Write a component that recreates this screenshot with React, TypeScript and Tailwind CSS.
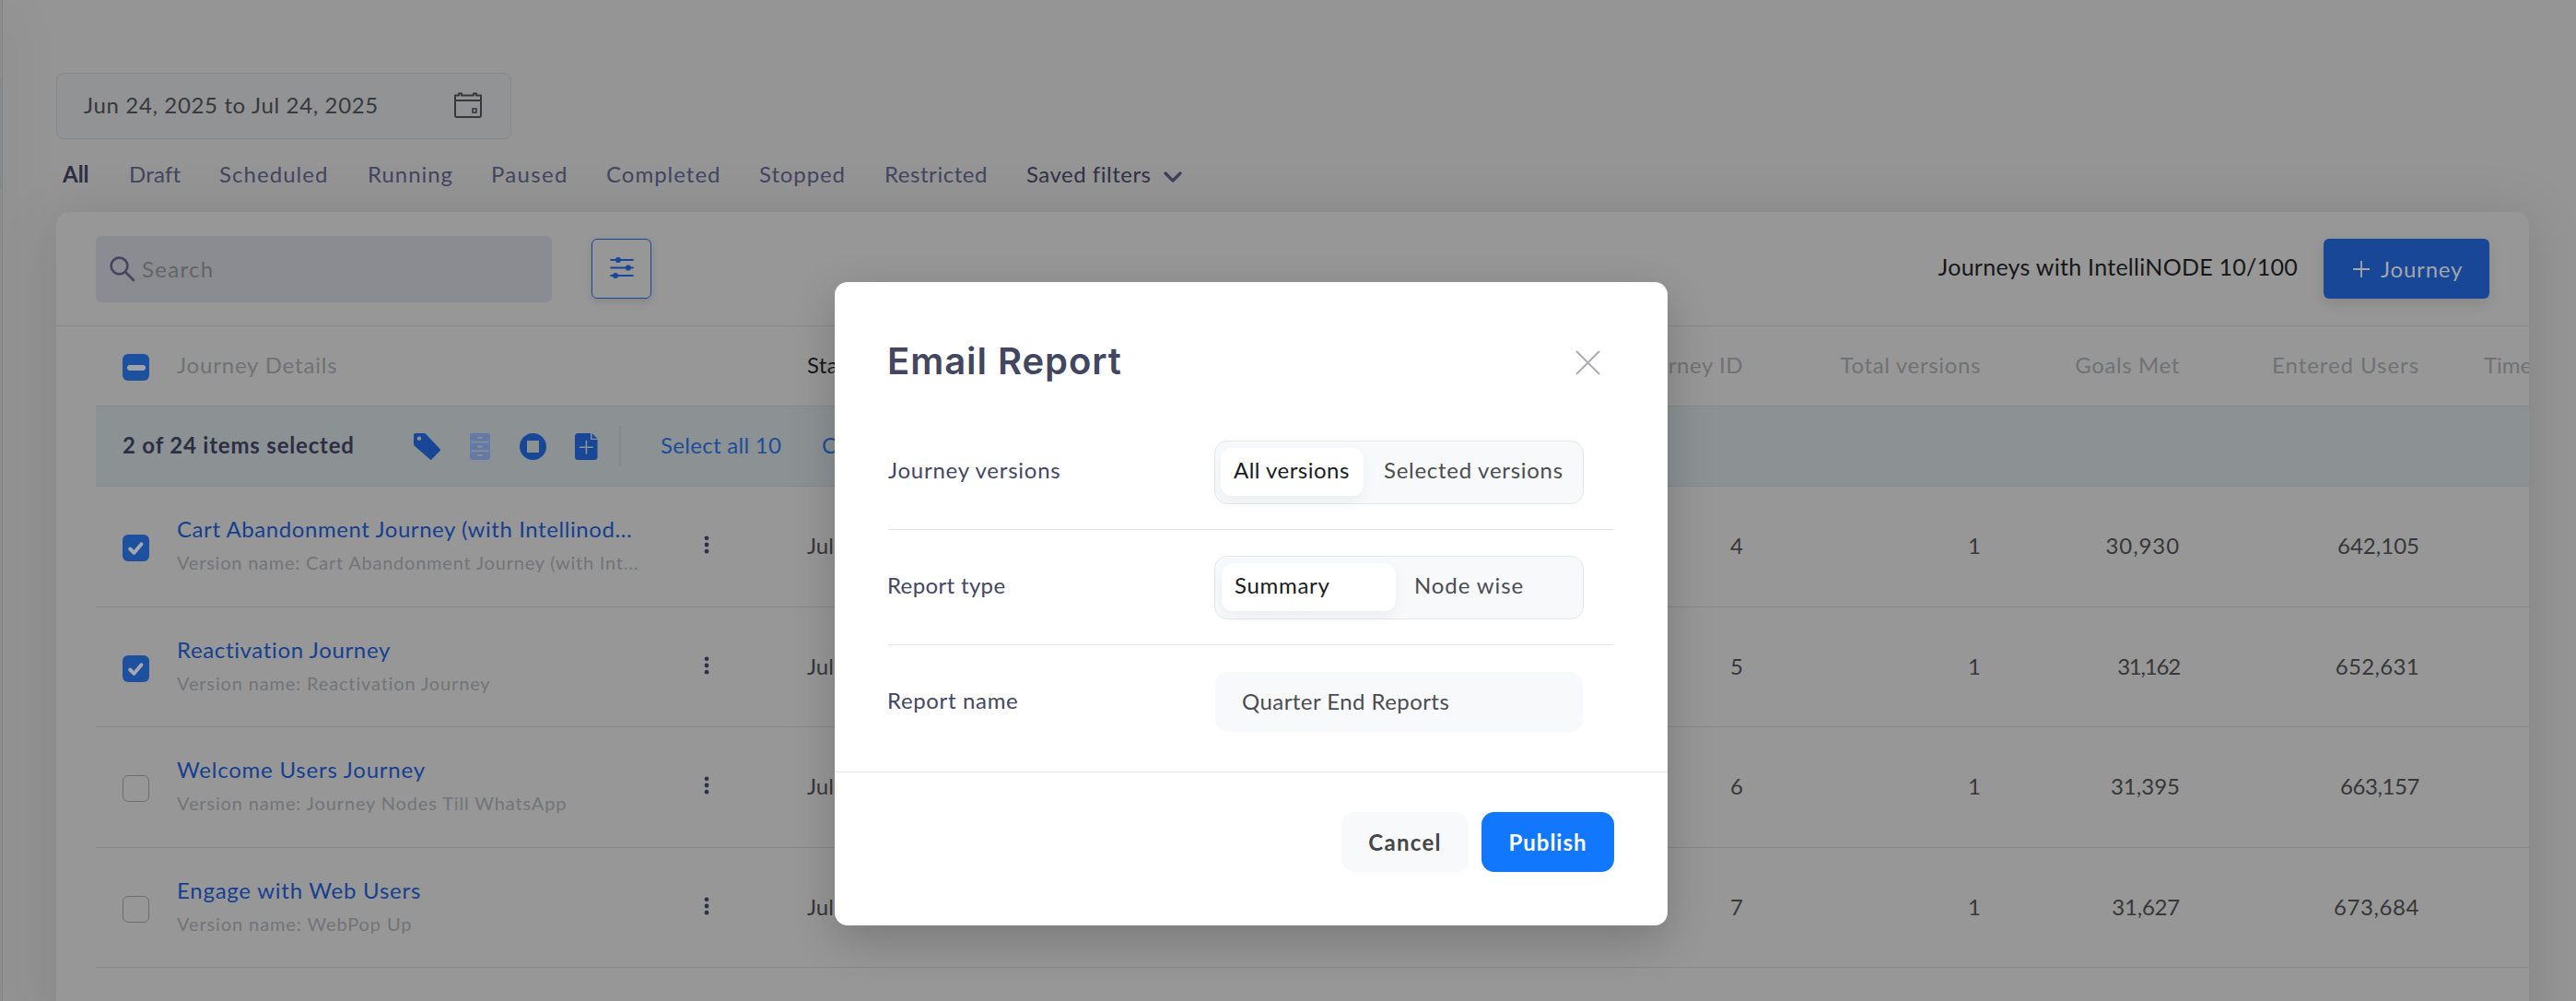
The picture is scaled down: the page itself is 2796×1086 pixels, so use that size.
import type { ReactNode } from "react";

type Row = {
  title: ReactNode;
  titleClass: string;
  version: string;
  versionClass: string;
  checked: boolean;
  id: string;
  goals: string;
  goalsClass: string;
  users: string;
  usersClass: string;
  height: string;
};

const tabs = [
  { label: "All", cls: "w-[73px] font-bold text-[#2c2e43] pl-px" },
  { label: "Draft", cls: "w-[98px] tracking-[0.2px]" },
  { label: "Scheduled", cls: "w-[161px] tracking-[1.05px]" },
  { label: "Running", cls: "w-[134px] tracking-[0.94px]" },
  { label: "Paused", cls: "w-[125px] tracking-[1.3px]" },
  { label: "Completed", cls: "w-[166px] tracking-[1px]" },
  { label: "Stopped", cls: "w-[136px] tracking-[0.9px]" },
  { label: "Restricted", cls: "w-[154px] tracking-[0.55px]" },
];

const rows: Row[] = [
  {
    title: "Cart Abandonment Journey (with Intellinod...",
    titleClass: "tracking-[0.57px]",
    version: "Version name: Cart Abandonment Journey (with Int...",
    versionClass: "tracking-[0.78px]",
    checked: true,
    id: "4",
    goals: "30,930",
    goalsClass: "tracking-[0.9px]",
    users: "642,105",
    usersClass: "tracking-[0px]",
    height: "h-[131px]",
  },
  {
    title: "Reactivation Journey",
    titleClass: "tracking-[0.65px]",
    version: "Version name: Reactivation Journey",
    versionClass: "tracking-[0.85px]",
    checked: true,
    id: "5",
    goals: "31,162",
    goalsClass: "tracking-[-1.2px]",
    users: "652,631",
    usersClass: "tracking-[0.33px]",
    height: "h-[130px]",
  },
  {
    title: "Welcome Users Journey",
    titleClass: "tracking-[0.78px]",
    version: "Version name: Journey Nodes Till WhatsApp",
    versionClass: "tracking-[0.86px]",
    checked: false,
    id: "6",
    goals: "31,395",
    goalsClass: "tracking-[0px]",
    users: "663,157",
    usersClass: "tracking-[-0.42px]",
    height: "h-[131px]",
  },
  {
    title: "Engage with Web Users",
    titleClass: "tracking-[0.75px]",
    version: "Version name: WebPop Up",
    versionClass: "tracking-[0.9px]",
    checked: false,
    id: "7",
    goals: "31,627",
    goalsClass: "tracking-[-0.23px]",
    users: "673,684",
    usersClass: "tracking-[0.58px]",
    height: "h-[130px]",
  },
];

const columns = "grid grid-cols-[88px_544px_140px_400px_616px_258px_216px_260px_1fr]";

function CalendarIcon() {
  return (
    <svg width="32" height="30" viewBox="0 0 32 30" fill="none" stroke="#36383a" strokeWidth="2">
      <path d="M2 4.5h4v-2h3v2h13v-2h3v2h5V26a2 2 0 0 1-2 2H4a2 2 0 0 1-2-2z" strokeLinejoin="round" />
      <path d="M2 10h28" />
      <rect x="21" y="19" width="4" height="4" strokeWidth="1.6" />
    </svg>
  );
}

function SearchIcon() {
  return (
    <svg width="28" height="28" viewBox="0 0 28 28" fill="none" stroke="#434660" strokeWidth="2.6" strokeLinecap="round">
      <circle cx="10.5" cy="10.5" r="8.9" />
      <path d="M17 17l9 9" />
    </svg>
  );
}

function SlidersIcon() {
  return (
    <svg width="26" height="24" viewBox="0 0 26 24" stroke="#184797" strokeWidth="1.8" strokeLinecap="round" fill="#184797">
      <path d="M1 3h24M1 11.5h24M1 20h24" />
      <g stroke="none">
        <circle cx="9" cy="3" r="3.1" />
        <circle cx="19.8" cy="11.5" r="3.1" />
        <circle cx="6" cy="20" r="3.1" />
      </g>
    </svg>
  );
}

function Checkbox({ state }: { state: "off" | "on" | "mixed" }) {
  if (state === "off") {
    return <div className="size-[29px] rounded-md border border-[#6d6d70]" />;
  }
  return (
    <div className="flex size-[29px] items-center justify-center rounded-md bg-[#1d509f]">
      {state === "on" ? (
        <svg width="19" height="16" viewBox="0 0 19 16" fill="none" stroke="#a5a9af" strokeWidth="3.9" strokeLinecap="round" strokeLinejoin="round">
          <path d="M3.2 8.5l4.3 4.3L15.5 3.2" />
        </svg>
      ) : (
        <div className="h-[6px] w-5 rounded-[3px] bg-[#a0a3a8]" />
      )}
    </div>
  );
}

function TagIcon() {
  return (
    <svg width="29" height="29" viewBox="0 0 29 29" fill="#184797">
      <path
        fillRule="evenodd"
        d="M2 0h9.5a2 2 0 0 1 1.4.6l15.8 16.6a1.3 1.3 0 0 1 0 1.8l-9.3 9.6a1 1 0 0 1-1.5 0L.6 13.4a2 2 0 0 1-.6-1.4V2a2 2 0 0 1 2-2zm4 3.4a2.3 2.3 0 1 0 0 4.6 2.3 2.3 0 0 0 0-4.6z"
      />
    </svg>
  );
}

function CabinetIcon() {
  return (
    <svg width="22" height="29" viewBox="0 0 22 29">
      <rect width="22" height="29" rx="3" fill="#637aa6" />
      <g stroke="#8c9294" strokeLinecap="round">
        <path d="M2 9.5h18M2 19.2h18" strokeWidth="1.4" />
        <path d="M9 4.8h4M9 14.5h4M9 24h4" strokeWidth="1.8" />
      </g>
    </svg>
  );
}

function StopIcon() {
  return (
    <svg width="29" height="29" viewBox="0 0 29 29">
      <circle cx="14.5" cy="14.5" r="14.5" fill="#184797" />
      <rect x="8" y="8" width="13" height="13" rx="0.5" fill="#8c9294" />
    </svg>
  );
}

function AddFileIcon() {
  return (
    <svg width="25" height="29" viewBox="0 0 25 29">
      <path d="M3.5 0H17v7h7.5v18.5a3.5 3.5 0 0 1-3.5 3.5H3.5A3.5 3.5 0 0 1 0 25.5v-22A3.5 3.5 0 0 1 3.5 0zM18.5.3l5.8 5.4h-5.8z" fill="#184797" />
      <path d="M12.4 8.5v13.5M5.6 15.2h13.6" stroke="#8c9294" strokeWidth="1.6" strokeLinecap="round" />
    </svg>
  );
}

function KebabIcon() {
  return (
    <svg width="6" height="20" viewBox="0 0 6 20" fill="#2f3247">
      <circle cx="3" cy="2.8" r="2.4" />
      <circle cx="3" cy="10" r="2.4" />
      <circle cx="3" cy="17.2" r="2.4" />
    </svg>
  );
}

function TableRow({ row }: { row: Row }) {
  return (
    <div className={`${columns} ${row.height} border-b border-[#868788] text-[#363738]`}>
      <div className="pt-[52px] pl-[29px]">
        <Checkbox state={row.checked ? "on" : "off"} />
      </div>
      <div className="pt-[31px]">
        <div className={`${row.titleClass} text-[#153f91]`}>{row.title}</div>
        <div className={`${row.versionClass} mt-[9px] text-xl leading-6 text-[#727477]`}>{row.version}</div>
      </div>
      <div className="pt-[53px] pl-7">
        <KebabIcon />
      </div>
      <div className="pt-[49px]">Jul 24, 2025</div>
      <div className="pt-[49px] text-right">{row.id}</div>
      <div className="pt-[49px] text-right">1</div>
      <div className={`${row.goalsClass} pt-[49px] text-right`}>{row.goals}</div>
      <div className={`${row.usersClass} pt-[49px] text-right`}>{row.users}</div>
    </div>
  );
}

function JourneysCard() {
  return (
    <section className="mt-[26px] h-[900px] overflow-hidden rounded-[14px] bg-[#979797] shadow-[0_4px_60px_rgba(0,0,0,0.13)]">
      <div className="flex h-[124px] items-start border-b border-[#868788] px-[43px] pt-[26px]">
        <div className="flex h-[72px] w-[495px] items-center rounded-md bg-[#8b8c91] pl-[15px]">
          <SearchIcon />
          <span className="ml-[7px] tracking-[1.3px] text-[#636467]">Search</span>
        </div>
        <div className="mt-[3px] ml-[43px] flex size-[65px] items-center justify-center rounded-md border border-[#184797] pb-[2px] shadow-[0_3px_8px_rgba(0,0,0,0.12)]">
          <SlidersIcon />
        </div>
        <span className="mt-[18px] ml-auto text-[25px] tracking-[0.27px] text-[#161718]">Journeys with IntelliNODE 10/100</span>
        <button className="mt-[3px] ml-7 flex h-[65px] w-[180px] items-center rounded-md bg-[#184797] pl-8 text-[#a3a5a9] shadow-[0_6px_16px_rgba(0,0,0,0.1)]">
          <svg width="18" height="18" viewBox="0 0 18 18" stroke="currentColor" strokeWidth="1.8">
            <path d="M9 0v18M0 9h18" />
          </svg>
          <span className="ml-3 tracking-[0.8px]">Journey</span>
        </button>
      </div>

      <div className="pl-[43px]">
        <div className={`${columns} h-[87px] border-b border-[#868788] pt-[27px] text-[#6f7275]`}>
          <div className="pt-[3px] pl-[29px]">
            <Checkbox state="mixed" />
          </div>
          <div className="tracking-[0.82px]">Journey Details</div>
          <div />
          <div className="tracking-[0.3px] text-[#161718]">Start Date</div>
          <div className="text-right tracking-[0.55px]">Journey ID</div>
          <div className="text-right tracking-[0.65px]">Total versions</div>
          <div className="text-right tracking-[0.6px]">Goals Met</div>
          <div className="text-right tracking-[0.95px]">Entered Users</div>
          <div className="pl-[70px] whitespace-nowrap">Time</div>
        </div>

        <div className="flex h-[87px] items-center border-b border-[#868788] bg-[#8c9294] pl-[29px]">
          <span className="mb-[2px] w-[316px] font-bold tracking-[0.8px] text-[#2c2e43]">2 of 24 items selected</span>
          <div className="flex w-[223px] items-center">
            <TagIcon />
            <span className="ml-8">
              <CabinetIcon />
            </span>
            <span className="ml-8">
              <StopIcon />
            </span>
            <span className="ml-[31px]">
              <AddFileIcon />
            </span>
          </div>
          <div className="mr-[43px] h-[43px] w-[2px] bg-[#85888a]" />
          <span className="mb-[2px] w-[175px] tracking-[0.3px] text-[#1c4c99]">Select all 10</span>
          <span className="mb-[2px] text-[#1c4c99]">Clear</span>
        </div>

        {rows.map((row) => (
          <TableRow key={row.id} row={row} />
        ))}
      </div>
    </section>
  );
}

function ReportDialog() {
  return (
    <div
      role="dialog"
      className="absolute top-[306px] left-[906px] h-[698px] w-[904px] rounded-[14px] bg-white shadow-[0_16px_50px_rgba(0,0,0,0.2)]"
    >
      <div className="flex h-[144px] items-start justify-between px-[58px] pt-[61px]">
        <h2 className="-ml-px font-[Inter] text-[40px] leading-[50px] font-semibold tracking-[0.95px] text-[#434661]">Email Report</h2>
        <svg className="mt-[13px] mr-[15px]" width="27" height="27" viewBox="0 0 27 27" stroke="#a9aeb4" strokeWidth="2" strokeLinecap="round">
          <path d="M1.5 1.5l24 24M25.5 1.5l-24 24" />
        </svg>
      </div>

      <div className="px-[58px] text-[#444764]">
        <div className="flex h-[125px] border-b border-[#e3e4e5]">
          <span className="w-[354px] pt-[45px] tracking-[0.75px]">Journey versions</span>
          <div className="mt-7 flex h-[69px] w-[401px] rounded-[14px] border border-[#e4e6e8] bg-[#f8f9fb] p-[7px] pl-[6px]">
            <div className="h-[52px] w-[155px] rounded-xl bg-white pt-[9px] pl-[14px] tracking-[0.48px] whitespace-nowrap text-[#1b1c1e] shadow-[0_6px_16px_rgba(0,0,0,0.05)]">
              All versions
            </div>
            <div className="pt-[9px] pl-[22px] tracking-[0.72px] whitespace-nowrap text-[#4b4d50]">Selected versions</div>
          </div>
        </div>

        <div className="flex h-[125px] border-b border-[#e3e4e5]">
          <span className="-ml-px w-[355px] pt-[45px] tracking-[0.35px]">Report type</span>
          <div className="mt-7 flex h-[69px] w-[401px] rounded-[14px] border border-[#e4e6e8] bg-[#f8f9fb] p-[7px]">
            <div className="h-[52px] w-[189px] rounded-xl bg-white pt-[9px] pl-[14px] tracking-[0.7px] text-[#1b1c1e] shadow-[0_6px_16px_rgba(0,0,0,0.05)]">
              Summary
            </div>
            <div className="pt-[9px] pl-5 tracking-[0.9px] text-[#4b4d50]">Node wise</div>
          </div>
        </div>

        <div className="flex h-[137px]">
          <span className="-ml-px w-[356px] pt-[45px] tracking-[0.65px]">Report name</span>
          <div className="mt-[29px] h-[65px] w-[399px] rounded-[14px] bg-[#f8f9fb] pt-[17px] pl-[29px] tracking-[0.44px] text-[#4b4d50]">
            Quarter End Reports
          </div>
        </div>
      </div>

      <div className="flex justify-end gap-[14px] border-t border-[#e3e4e5] px-[58px] pt-[43px] font-bold">
        <button className="h-[65px] w-[138px] rounded-[14px] bg-[#f8f9fb] tracking-[1.3px] text-[#444648]">Cancel</button>
        <button className="h-[65px] w-[144px] rounded-[14px] bg-[#1177fc] tracking-[0.95px] text-white">Publish</button>
      </div>
    </div>
  );
}

export default function App() {
  return (
    <div className="relative flex h-[1086px] w-[2796px] overflow-hidden bg-[#959595] font-[Lato,sans-serif] text-2xl leading-[30px]">
      <aside className="w-[3px] shrink-0 border-r border-[#838383] bg-[#8e8e8e] shadow-[0_10px_50px_rgba(0,0,0,0.4)]">
        <div className="mt-[85px] h-[120px] bg-[#84898b]" />
      </aside>

      <main className="w-[2742px] pt-[79px] pl-[58px]">
        <div className="flex h-[72px] w-[494px] items-center justify-between rounded-lg border border-[#868788] bg-[#929395] pr-[30px] pb-[2px] pl-[29px] text-[#37393b]">
          <span className="tracking-[0.65px]">Jun 24, 2025 to Jul 24, 2025</span>
          <CalendarIcon />
        </div>

        <nav className="mt-[23px] flex h-[30px] pl-[6px] text-[#42455f]">
          {tabs.map((tab) => (
            <span key={tab.label} className={tab.cls}>
              {tab.label}
            </span>
          ))}
          <span className="tracking-[0.5px] text-[#2f3145]">Saved filters</span>
          <svg className="mt-[12px] ml-[14px]" width="20" height="13" viewBox="0 0 20 13" fill="none" stroke="#3c3f58" strokeWidth="3.2" strokeLinecap="round" strokeLinejoin="round">
            <path d="M2 2l8 8 8-8" />
          </svg>
        </nav>

        <JourneysCard />
      </main>

      <ReportDialog />
    </div>
  );
}
